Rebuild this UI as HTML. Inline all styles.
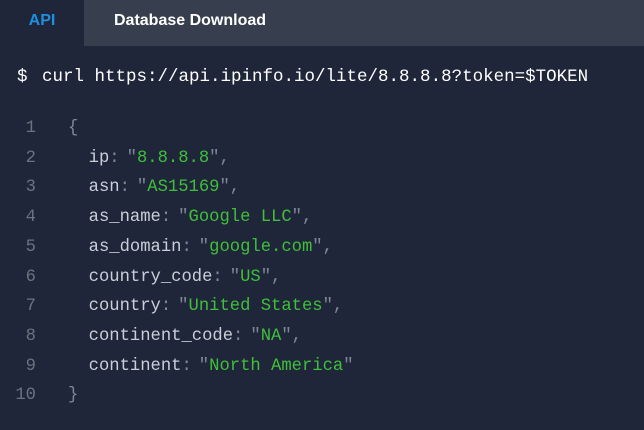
<!DOCTYPE html>
<html><head><meta charset="utf-8"><style>
html,body{margin:0;padding:0;width:644px;height:430px;overflow:hidden;background:#1f2639;}
.tabs{position:absolute;top:0;left:0;width:644px;height:46px;}
.t1{position:absolute;left:0;top:0;width:84px;height:46px;background:#1f2639;color:#1e8fe1;font:bold 16px "Liberation Sans",sans-serif;line-height:42px;text-align:center;}
.t2{position:absolute;left:84px;top:0;width:560px;height:46px;background:#373e4d;color:#fff;font:bold 16px "Liberation Sans",sans-serif;line-height:42px;}
.t2 span{position:absolute;left:30px;}
.curl{position:absolute;top:67px;color:#fff;font:17.5px "Liberation Mono",monospace;white-space:pre;}
.code{position:absolute;top:118px;left:0;font:17.2px "Liberation Mono",monospace;white-space:pre;}
.ln{position:absolute;height:30px;line-height:22px;}
.n{position:absolute;width:36px;text-align:right;color:#6b7280;left:0;}
.c{position:absolute;left:68px;color:#c9ced8;}
.k{color:#c9ced8}.p{color:#7f8797}.s{color:#3fbf3a}
.g{display:inline-block;width:7px}
</style></head><body>
<div class="tabs"><div class="t1">API</div><div class="t2"><span>Database Download</span></div></div>
<div class="curl" style="left:17px">$</div>
<div class="curl" style="left:42px">curl https://api.ipinfo.io/lite/8.8.8.8?token=$TOKEN</div>
<div class="code">
<div class="ln" style="top:0"><span class="n">1</span><span class="c"><span class="p">{</span></span></div>
<div class="ln" style="top:29.7px"><span class="n">2</span><span class="c">  <span class="k">ip</span><span class="p">:</span><span class="g"></span><span class="p">"</span><span class="s">8.8.8.8</span><span class="p">",</span></span></div>
<div class="ln" style="top:59.4px"><span class="n">3</span><span class="c">  <span class="k">asn</span><span class="p">:</span><span class="g"></span><span class="p">"</span><span class="s">AS15169</span><span class="p">",</span></span></div>
<div class="ln" style="top:89.1px"><span class="n">4</span><span class="c">  <span class="k">as_name</span><span class="p">:</span><span class="g"></span><span class="p">"</span><span class="s">Google LLC</span><span class="p">",</span></span></div>
<div class="ln" style="top:118.8px"><span class="n">5</span><span class="c">  <span class="k">as_domain</span><span class="p">:</span><span class="g"></span><span class="p">"</span><span class="s">google.com</span><span class="p">",</span></span></div>
<div class="ln" style="top:148.5px"><span class="n">6</span><span class="c">  <span class="k">country_code</span><span class="p">:</span><span class="g"></span><span class="p">"</span><span class="s">US</span><span class="p">",</span></span></div>
<div class="ln" style="top:178.2px"><span class="n">7</span><span class="c">  <span class="k">country</span><span class="p">:</span><span class="g"></span><span class="p">"</span><span class="s">United States</span><span class="p">",</span></span></div>
<div class="ln" style="top:207.9px"><span class="n">8</span><span class="c">  <span class="k">continent_code</span><span class="p">:</span><span class="g"></span><span class="p">"</span><span class="s">NA</span><span class="p">",</span></span></div>
<div class="ln" style="top:237.6px"><span class="n">9</span><span class="c">  <span class="k">continent</span><span class="p">:</span><span class="g"></span><span class="p">"</span><span class="s">North America</span><span class="p">"</span></span></div>
<div class="ln" style="top:267.3px"><span class="n">10</span><span class="c"><span class="p">}</span></span></div>
</div>
</body></html>
